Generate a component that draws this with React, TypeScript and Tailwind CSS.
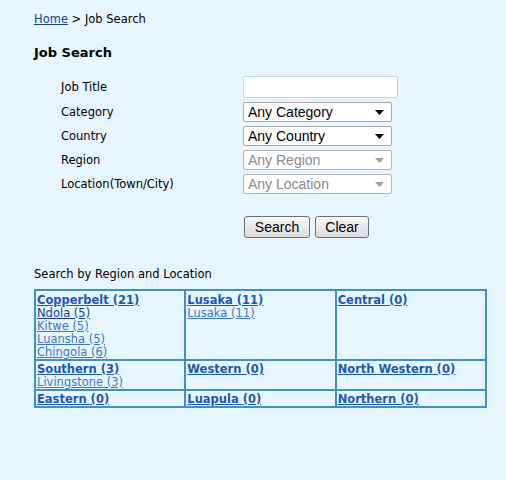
import React from "react";

const font = { fontFamily: '"DejaVu Sans", Verdana, sans-serif' };

function Select({ label, disabled }: { label: string; disabled?: boolean }) {
  return (
    <div
      className={`flex h-[20px] w-[149px] items-center justify-between rounded-[2px] border bg-white pl-[4px] pr-[7px] text-[14px] ${
        disabled ? "border-[#b5b5b5] text-[#8a8a8a]" : "border-[#a9a9a9] text-black"
      }`}
      style={{ fontFamily: '"Liberation Sans", Arial, sans-serif' }}
    >
      <span className="leading-[18px]">{label}</span>
      <svg width="9" height="5" viewBox="0 0 9 5">
        <path d="M0 0H9L4.5 5Z" fill={disabled ? "#a0a0a0" : "#000"} />
      </svg>
    </div>
  );
}

function Btn({ children, w }: { children: React.ReactNode; w: string }) {
  return (
    <div
      className={`flex h-[22px] ${w} items-center justify-center rounded-[3px] border border-[#707070] bg-gradient-to-b from-[#f6f6f6] to-[#dcdcdc] text-[14px] text-black`}
      style={{ fontFamily: '"Liberation Sans", Arial, sans-serif' }}
    >
      {children}
    </div>
  );
}

type Cell = { title: string; items: { t: string; dark?: boolean }[] };

const rows: Cell[][] = [
  [
    {
      title: "Copperbelt (21)",
      items: [
        { t: "Ndola (5)", dark: true },
        { t: "Kitwe (5)" },
        { t: "Luansha (5)" },
        { t: "Chingola (6)" },
      ],
    },
    { title: "Lusaka (11)", items: [{ t: "Lusaka (11)" }] },
    { title: "Central (0)", items: [] },
  ],
  [
    { title: "Southern (3)", items: [{ t: "Livingstone (3)" }] },
    { title: "Western (0)", items: [] },
    { title: "North Western (0)", items: [] },
  ],
  [
    { title: "Eastern (0)", items: [] },
    { title: "Luapula (0)", items: [] },
    { title: "Northern (0)", items: [] },
  ],
];

export default function App() {
  return (
    <div
      className="h-[480px] w-[506px] overflow-hidden bg-[#e6f5fe] pl-[34px] text-[11.5px] text-black"
      style={font}
    >
      <div className="pt-[12px] leading-[14px]">
        <span className="text-[#1a3d8f] underline">Home</span> &gt; Job Search
      </div>

      <div className="mt-[19px] text-[13px] font-bold leading-[16px]">Job Search</div>

      <div className="mt-[13px] pl-[27px]">
        <div className="flex h-[26px] items-center">
          <div className="w-[182px] pt-[1px]">Job Title</div>
          <div className="h-[22px] w-[155px] rounded-[2px] border border-[#c8d2dc] bg-white" />
        </div>
        <div className="flex h-[24px] items-center">
          <div className="w-[182px] pt-[1px]">Category</div>
          <Select label="Any Category" />
        </div>
        <div className="flex h-[24px] items-center">
          <div className="w-[182px] pt-[1px]">Country</div>
          <Select label="Any Country" />
        </div>
        <div className="flex h-[24px] items-center">
          <div className="w-[182px] pt-[1px]">Region</div>
          <Select label="Any Region" disabled />
        </div>
        <div className="flex h-[24px] items-center">
          <div className="w-[182px] pt-[1px]">Location(Town/City)</div>
          <Select label="Any Location" disabled />
        </div>
        <div className="ml-[183px] mt-[20px] flex gap-[5px]">
          <Btn w="w-[66px]">Search</Btn>
          <Btn w="w-[54px]">Clear</Btn>
        </div>
      </div>

      <div className="mt-[29px] leading-[14px]">Search by Region and Location</div>

      <table className="mt-[8px] w-[453px] border-collapse border-2 border-[#3d92c2]">
        <tbody>
          {rows.map((r, i) => (
            <tr key={i}>
              {r.map((c, j) => (
                <td
                  key={j}
                  className="w-[150px] border-2 border-[#3d92c2] px-[1px] pb-0 align-top leading-[13px]"
                >
                  <div
                    className={`${i === 0 ? "pt-[3px]" : "pt-[2px]"} font-bold text-[#1d58b0] underline`}
                  >
                    {c.title}
                  </div>
                  {c.items.map((it) => (
                    <div
                      key={it.t}
                      className={`underline ${it.dark ? "text-[#1a3d8f]" : "text-[#3a78c6]"}`}
                    >
                      {it.t}
                    </div>
                  ))}
                  {i === 1 && c.items.length === 0 ? <div>&nbsp;</div> : null}
                </td>
              ))}
            </tr>
          ))}
        </tbody>
      </table>
    </div>
  );
}
